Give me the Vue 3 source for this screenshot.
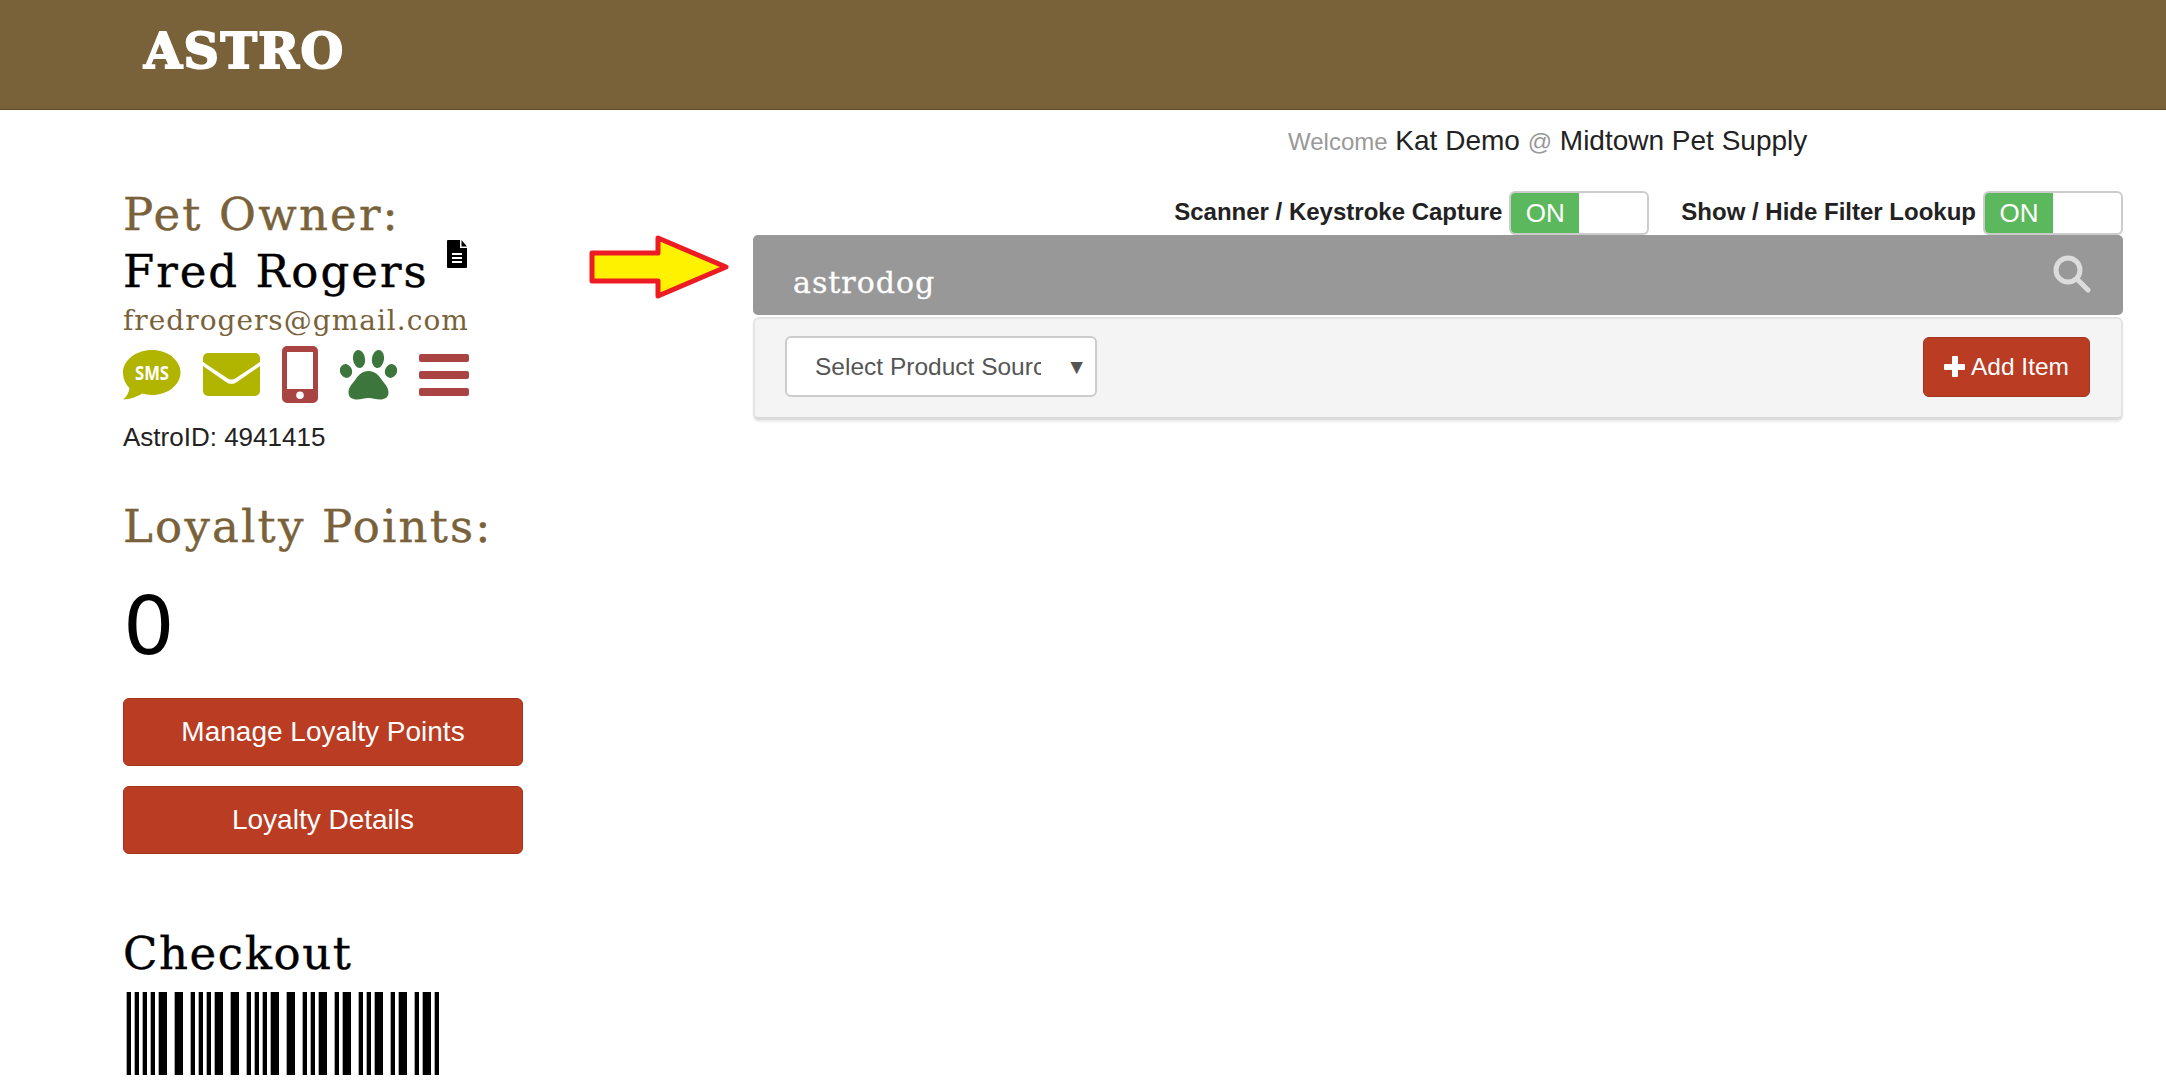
<script setup>
const bars = [
  [20, 13], [44, 13], [68, 13], [92, 13], [116, 25], [164, 25], [212, 13], [236, 13], [260, 13], [284, 25],
  [332, 25], [380, 13], [404, 13], [428, 13], [452, 25], [500, 25], [548, 13], [572, 13], [596, 25],
  [644, 13], [668, 25], [716, 13], [740, 13], [764, 25], [812, 13], [836, 25], [884, 13], [908, 25], [944, 13]
]

const toggles = [
  { id: 1, label: 'Scanner / Keystroke Capture' },
  { id: 2, label: 'Show / Hide Filter Lookup' }
]
</script>

<template>
  <div class="page">
    <header class="topbar">
      <span class="logo">ASTRO</span>
    </header>

    <div class="columns">
      <aside class="side">
        <h2 class="side-title">Pet Owner:</h2>
        <div class="owner-row">
          <span class="owner-name">Fred Rogers</span>
          <svg class="doc-icon" viewBox="0 0 20 28" width="20" height="28">
            <path d="M1 0h12v8h7v19a1 1 0 0 1-1 1H1a1 1 0 0 1-1-1V1a1 1 0 0 1 1-1z" fill="#000" />
            <path d="M14.5 0L20 6.500h-5.500z" fill="#000" />
            <path d="M5 13h10v2H5zM5 17h10v2H5zM5 21h10v2H5z" fill="#fff" />
          </svg>
        </div>
        <div class="owner-email">fredrogers@gmail.com</div>

        <div class="contact-icons">
          <svg width="58" height="50" viewBox="0 0 58 50">
            <path d="M29 0c15.500 0 28.500 10 28.500 22.500S44.500 45 29 45c-3.500 0-6.800-.5-9.800-1.400C14 47 7 49.500 0 49.500c3.500-2.500 5.800-6.500 6.500-11.500C2.500 34 0 28.500 0 22.500 0 10 13.500 0 29 0z" fill="#b1b500" />
            <text x="29" y="30" text-anchor="middle" class="sms-text" textLength="34" lengthAdjust="spacingAndGlyphs">SMS</text>
          </svg>
          <svg width="57" height="43" viewBox="0 0 57 43">
            <path d="M5 0h47a5 5 0 0 1 5 5v4L33 25c-3 2-6 2-9 0L0 9V5a5 5 0 0 1 5-5z" fill="#b1b500" />
            <path d="M0 13l23 16c3.500 2.500 7.500 2.500 11 0l23-16v25a5 5 0 0 1-5 5H5a5 5 0 0 1-5-5z" fill="#b1b500" />
          </svg>
          <svg width="36" height="57" viewBox="0 0 36 57">
            <path fill-rule="evenodd" d="M5 0h26a5 5 0 0 1 5 5v47a5 5 0 0 1-5 5H5a5 5 0 0 1-5-5V5a5 5 0 0 1 5-5zM5 6v37h26V6zM18 45.500a3.800 3.800 0 1 0 0 7.600 3.800 3.800 0 0 0 0-7.600z" fill="#a94442" />
          </svg>
          <svg width="57" height="50" viewBox="0 0 57 50">
            <ellipse cx="6" cy="21" rx="6" ry="7" transform="rotate(-20 6 21)" fill="#3c763d" />
            <ellipse cx="19" cy="9" rx="6" ry="9" transform="rotate(-8 19 9)" fill="#3c763d" />
            <ellipse cx="38" cy="9" rx="6" ry="9" transform="rotate(8 38 9)" fill="#3c763d" />
            <ellipse cx="51" cy="21" rx="6" ry="7" transform="rotate(20 51 21)" fill="#3c763d" />
            <path d="M28.500 21c6 0 10 4 13 8.500 3 4 7 7.500 7 13 0 5-4 7-8.500 7-4 0-7.500-1.500-11.500-1.500S21 49.500 17 49.500c-4.500 0-8.500-2-8.500-7 0-5.500 4-9 7-13 3-4.500 7-8.500 13-8.500z" fill="#3c763d" />
          </svg>
          <div class="menu-icon"><i></i><i></i><i></i></div>
        </div>

        <div class="astro-id">AstroID: 4941415</div>

        <h2 class="side-title loyalty-title">Loyalty Points:</h2>
        <div class="points">0</div>

        <button class="btn side-btn">Manage Loyalty Points</button>
        <button class="btn side-btn second">Loyalty Details</button>

        <h2 class="checkout-title">Checkout</h2>
        <svg class="barcode" width="320" height="83" viewBox="0 0 960 83" preserveAspectRatio="none">
          <rect v-for="b in bars" :key="b[0]" :x="b[0]" y="0" :width="b[1]" height="83" fill="#000" />
        </svg>
      </aside>

      <main class="main">
        <div class="welcome">
          <span class="muted">Welcome</span> Kat Demo <span class="muted">@</span> Midtown Pet Supply
        </div>

        <div class="toggles">
          <div v-for="t in toggles" :key="t.id" class="toggle-item">
            <span class="toggle-label">{{ t.label }}</span>
            <span class="toggle"><span class="toggle-on">ON</span></span>
          </div>
        </div>

        <div class="search-bar">
          <span class="search-text">astrodog</span>
          <svg class="search-icon" width="38" height="38" viewBox="0 0 38 38">
            <circle cx="15" cy="15" r="12" fill="none" stroke="#dcdcdc" stroke-width="5" />
            <path d="M24 24l11 11" stroke="#dcdcdc" stroke-width="5" stroke-linecap="round" />
          </svg>
        </div>

        <div class="panel">
          <div class="select-box">
            <span class="select-text">Select Product Source</span>
            <span class="select-caret">▼</span>
          </div>
          <button class="btn add-btn"><span class="plus"></span>Add Item</button>
        </div>

        <svg class="arrow" width="140" height="64" viewBox="0 0 140 64">
          <path d="M3 18h66V3l68 29-68 29V46H3z" fill="#fff200" stroke="#ed1c24" stroke-width="5" stroke-linejoin="round" />
        </svg>
      </main>
    </div>
  </div>
</template>

<style>
html, body {
  margin: 0;
  background: #fff;
  overflow: hidden;
}
</style>

<style scoped>
.page {
  height: 1086px;
  font-family: "Liberation Sans", Arial, sans-serif;
  color: #222;
  overflow: hidden;
}

.topbar {
  height: 110px;
  box-sizing: border-box;
  background: #79623a;
  border-bottom: 1px solid #5c4a2a;
  padding: 26px 0 0 144px;
}

.logo {
  display: block;
  font-family: "DejaVu Serif", serif;
  font-weight: 700;
  font-size: 49px;
  line-height: 50px;
  letter-spacing: 1.5px;
  color: #fff;
  -webkit-text-stroke: 2px #fff;
}

.columns {
  display: flex;
}

.side {
  width: 753px;
  box-sizing: border-box;
  padding: 77px 0 0 123px;
}

.side-title {
  margin: 0;
  font-family: "DejaVu Serif", serif;
  font-weight: 400;
  font-size: 45px;
  line-height: 56px;
  letter-spacing: 2.2px;
  color: #79623a;
  -webkit-text-stroke: 0.4px #79623a;
}

.owner-row {
  display: flex;
  align-items: flex-start;
}

.owner-name {
  font-family: "DejaVu Serif", serif;
  font-size: 45px;
  line-height: 58px;
  letter-spacing: 2px;
  color: #000;
  -webkit-text-stroke: 0.4px #000;
}

.doc-icon {
  margin: -3px 0 0 18px;
}

.owner-email {
  font-family: "DejaVu Serif", serif;
  font-size: 28px;
  line-height: 40px;
  letter-spacing: 1px;
  color: #79623a;
}

.contact-icons {
  display: flex;
  align-items: center;
  gap: 22px;
  height: 57px;
  margin-top: 5px;
}

.sms-text {
  font-family: "Open Sans", sans-serif;
  font-size: 20px;
  font-weight: 700;
  fill: #fff;
}

.menu-icon {
  display: flex;
  flex-direction: column;
  gap: 9px;
  width: 50px;
}

.menu-icon i {
  display: block;
  height: 8px;
  border-radius: 2px;
  background: #a94442;
}

.astro-id {
  margin-top: 16px;
  font-size: 26px;
  line-height: 36px;
  color: #222;
}

.loyalty-title {
  margin-top: 44px;
}

.points {
  margin-top: 21px;
  font-family: "DejaVu Sans", sans-serif;
  font-size: 81px;
  line-height: 100px;
  color: #000;
}

.btn {
  display: block;
  box-sizing: border-box;
  border: 1px solid #a33520;
  border-radius: 6px;
  background: #b93c23;
  color: #fff;
  font-family: "Liberation Sans", Arial, sans-serif;
  font-size: 28px;
  padding: 0;
}

.side-btn {
  width: 400px;
  height: 68px;
  margin-top: 22px;
}

.side-btn.second {
  margin-top: 20px;
}

.checkout-title {
  margin: 70px 0 0;
  font-family: "DejaVu Serif", serif;
  font-weight: 400;
  font-size: 45px;
  line-height: 60px;
  letter-spacing: 1.6px;
  color: #000;
  -webkit-text-stroke: 0.4px #000;
}

.barcode {
  display: block;
  margin: 8px 0 0 -3px;
}

.main {
  position: relative;
  width: 1370px;
  box-sizing: border-box;
}

.welcome {
  margin-top: 13px;
  padding-left: 535px;
  font-size: 28px;
  line-height: 36px;
  color: #222;
}

.muted {
  color: #999;
  font-size: 24px;
}

.toggles {
  display: flex;
  justify-content: flex-end;
  gap: 32px;
  margin-top: 31px;
}

.toggle-item {
  display: flex;
  align-items: center;
  gap: 7px;
}

.toggle-label {
  margin-bottom: 3px;
  font-size: 24px;
  font-weight: 700;
  color: #222;
}

.toggle {
  display: block;
  width: 140px;
  height: 44px;
  box-sizing: border-box;
  border: 2px solid #ccc;
  border-radius: 6px;
  background: #fff;
  overflow: hidden;
}

.toggle-on {
  display: block;
  width: 68px;
  height: 100%;
  background: #5cb85c;
  color: #fff;
  font-size: 26px;
  line-height: 40px;
  text-align: center;
}

.search-bar {
  display: flex;
  align-items: center;
  justify-content: space-between;
  height: 80px;
  box-sizing: border-box;
  padding: 0 32px 0 40px;
  border-radius: 5px;
  background: #989898;
}

.search-text {
  font-family: "DejaVu Serif", serif;
  font-size: 30px;
  letter-spacing: 1px;
  color: #fff;
  margin-top: 14px;
  -webkit-text-stroke: 0.3px #fff;
}

.search-icon {
  margin-top: -2px;
}

.panel {
  display: flex;
  align-items: center;
  justify-content: space-between;
  height: 103px;
  box-sizing: border-box;
  margin-top: 2px;
  padding: 0 31px 3px 30px;
  background: #f4f4f4;
  border: 2px solid #e4e4e4;
  border-bottom: 3px solid #dcdcdc;
  border-radius: 6px;
  box-shadow: 0 2px 2px rgba(0, 0, 0, 0.08);
}

.select-box {
  display: flex;
  align-items: center;
  justify-content: space-between;
  width: 312px;
  height: 61px;
  box-sizing: border-box;
  padding: 0 8px 0 28px;
  background: #fff;
  border: 2px solid #ccc;
  border-radius: 6px;
  font-size: 24.5px;
  color: #555;
}

.select-text {
  width: 226px;
  overflow: hidden;
  white-space: nowrap;
}

.select-caret {
  font-size: 21px;
}

.add-btn {
  display: flex;
  align-items: center;
  justify-content: center;
  width: 167px;
  height: 60px;
  font-size: 24.5px;
}

.plus {
  position: relative;
  display: block;
  width: 21px;
  height: 21px;
  margin-right: 6px;
}

.plus::before,
.plus::after {
  content: "";
  position: absolute;
  background: #fff;
  border-radius: 1px;
}

.plus::before {
  left: 8px;
  top: 0;
  width: 6px;
  height: 21px;
}

.plus::after {
  left: 0;
  top: 8px;
  width: 21px;
  height: 6px;
}

.arrow {
  position: absolute;
  left: -164px;
  top: 125px;
}
</style>
